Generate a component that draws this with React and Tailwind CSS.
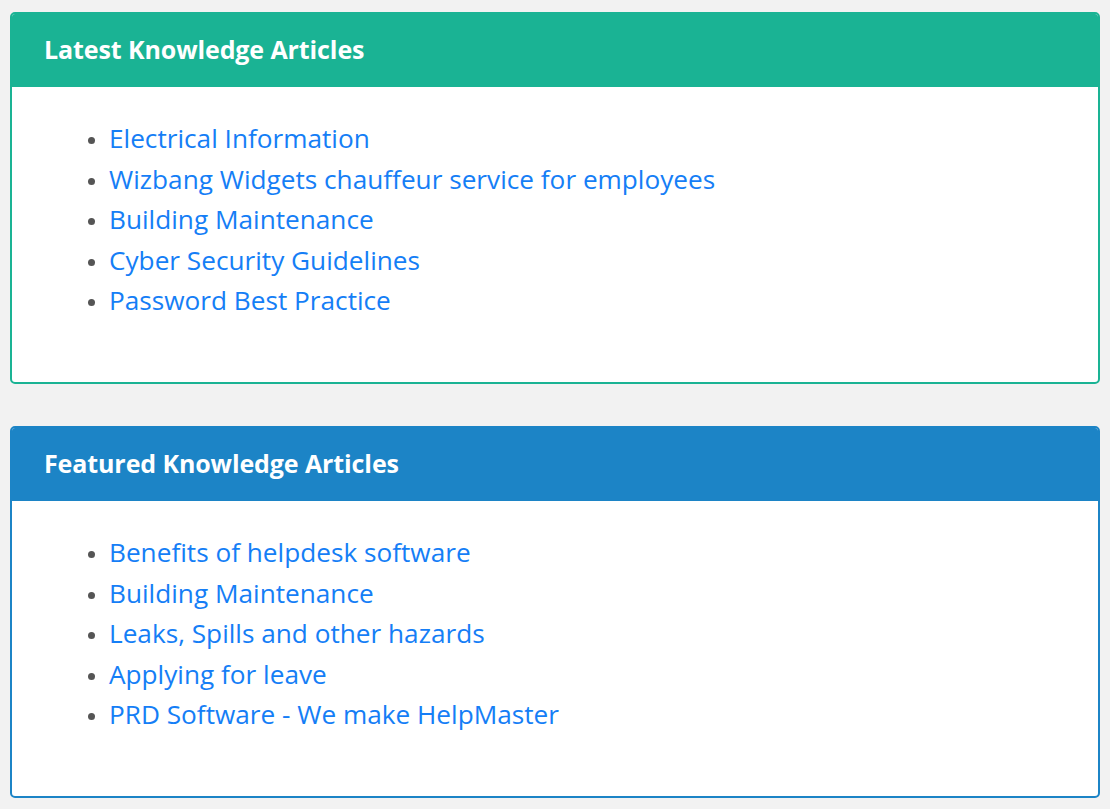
export default function App() {
  const cards = [
    {
      title: "Latest Knowledge Articles",
      head: "bg-[#1ab394]",
      border: "border-[#1ab394]",
      items: [
        "Electrical Information",
        "Wizbang Widgets chauffeur service for employees",
        "Building Maintenance",
        "Cyber Security Guidelines",
        "Password Best Practice",
      ],
    },
    {
      title: "Featured Knowledge Articles",
      head: "bg-[#1c84c6]",
      border: "border-[#1c84c6]",
      items: [
        "Benefits of helpdesk software",
        "Building Maintenance",
        "Leaks, Spills and other hazards",
        "Applying for leave",
        "PRD Software - We make HelpMaster",
      ],
    },
  ];
  return (
    <div
      className="min-h-[809px] w-[1110px] bg-[#f2f2f2] pt-[12px] px-[10px]"
      style={{ fontFamily: '"Open Sans", "Noto Sans", sans-serif' }}
    >
      <div className="flex flex-col gap-[42px]">
        {cards.map((c) => (
          <div
            key={c.title}
            className={`h-[372px] rounded-[5px] border-2 ${c.border} bg-white overflow-hidden flex flex-col`}
          >
            <div
              className={`${c.head} h-[74px] shrink-0 flex items-center px-[32px] text-white font-bold text-[25px] -mt-[1px] tracking-[-0.1px]`}
            >
              {c.title}
            </div>
            <ul className="list-disc pl-[97px] pt-[31px] marker:text-[#555] marker:text-[20px]">
              {c.items.map((it) => (
                <li key={it} className="leading-[40.5px] text-[26.2px] text-[#157ef6]">
                  {it}
                </li>
              ))}
            </ul>
          </div>
        ))}
      </div>
    </div>
  );
}
